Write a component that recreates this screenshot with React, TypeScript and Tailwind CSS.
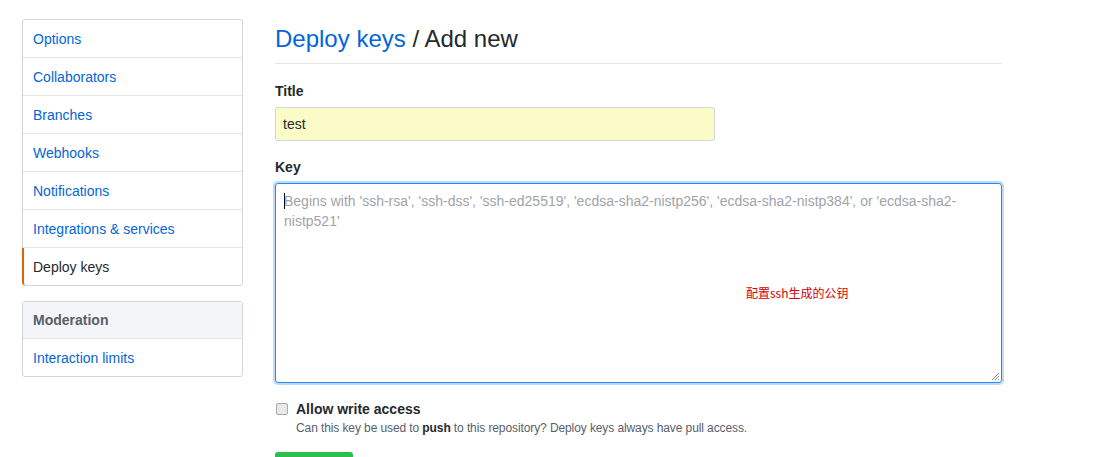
import React from "react";

const font = { fontFamily: '"Liberation Sans", Arial, sans-serif' };

const items = [
  "Options",
  "Collaborators",
  "Branches",
  "Webhooks",
  "Notifications",
  "Integrations & services",
];

export default function App() {
  return (
    <div
      className="flex w-[1102px] h-[457px] overflow-hidden bg-white pl-[22px] pt-[19px] gap-[32px] text-[14px] text-[#24292e]"
      style={font}
    >
      <div className="w-[221px] shrink-0 flex flex-col gap-[15px]">
        <div className="border border-[#d1d5da] rounded-[3px] flex flex-col">
          {items.map((t) => (
            <div
              key={t}
              className="h-[38px] shrink-0 border-b border-[#e1e4e8] pl-[10px] pt-[1px] flex items-center text-[#0366d6]"
            >
              {t}
            </div>
          ))}
          <div className="h-[37px] shrink-0 flex items-center pl-[8px] pt-[1px] border-l-2 border-[#e36209] -ml-px rounded-bl-[3px] text-[#24292e]">
            <span className="pl-[1px]">Deploy keys</span>
          </div>
        </div>
        <div className="border border-[#d1d5da] rounded-[3px] flex flex-col">
          <div className="h-[37px] shrink-0 bg-[#f3f5f8] border-b border-[#e1e4e8] pl-[10px] pt-[1px] flex items-center font-bold text-[#586069]">
            Moderation
          </div>
          <div className="h-[37px] shrink-0 pl-[10px] pt-[1px] flex items-center text-[#0366d6]">
            Interaction limits
          </div>
        </div>
      </div>

      <div className="w-[727px] shrink-0 flex flex-col">
        <div className="shrink-0 border-b border-[#e1e4e8] pt-[4px] pb-[8px] text-[24px] leading-[32px]">
          <span className="text-[#0366d6]">Deploy keys</span>
          <span className="text-[#24292e]"> / Add new</span>
        </div>
        <div className="shrink-0 mt-[17px] font-bold leading-[20px]">Title</div>
        <div className="shrink-0 mt-[6px] w-[440px] h-[34px] border border-[#d1d5da] rounded-[3px] bg-[#fafbc6] flex items-center pl-[7px] text-[#24292e]">
          test
        </div>
        <div className="shrink-0 mt-[16px] font-bold leading-[20px]">Key</div>
        <div className="shrink-0 mt-[6px] relative w-[727px] h-[200px] border border-[#2188ff] rounded-[3px] shadow-[0_0_0_2px_rgba(3,102,214,0.25)]">
          <div className="absolute left-[8px] top-[7px] right-[40px] leading-[20px] text-[#a0a4a8]">
            <span className="inline-block w-px h-[16px] bg-black align-[-3px] -mr-px" />
            Begins with 'ssh-rsa', 'ssh-dss', 'ssh-ed25519', 'ecdsa-sha2-nistp256', 'ecdsa-sha2-nistp384', or 'ecdsa-sha2-
            <br />
            nistp521'
          </div>
          <div
            className="absolute left-[470px] top-[101px] text-[12px] leading-[16px] text-[#d40000]"
            style={{ fontFamily: '"Noto Sans CJK SC", sans-serif' }}
          >
            配置ssh生成的公钥
          </div>
          <svg className="absolute right-[1px] bottom-[1px]" width="10" height="10" viewBox="0 0 10 10">
            <path d="M9 2 L2 9 M9 5 L5 9 M9 8 L8 9" stroke="#888" strokeWidth="1" />
          </svg>
        </div>
        <div className="shrink-0 mt-[19px] flex items-start gap-[8px]">
          <div className="mt-[1px] ml-[1px] w-[12px] h-[12px] border border-[#a9a9a9] rounded-[2px] bg-[#e8e8e8]" />
          <div className="flex flex-col">
            <div className="font-bold leading-[14px]">Allow write access</div>
            <div className="mt-[4px] text-[12px] leading-[16px] text-[#586069] tracking-[-0.1px]">
              Can this key be used to <span className="font-bold text-[#24292e]">push</span> to this repository? Deploy keys always have pull access.
            </div>
          </div>
        </div>
        <div className="shrink-0 mt-[16px] w-[78px] h-[32px] rounded-[3px] bg-[#2cbe4e]" />
      </div>
    </div>
  );
}
